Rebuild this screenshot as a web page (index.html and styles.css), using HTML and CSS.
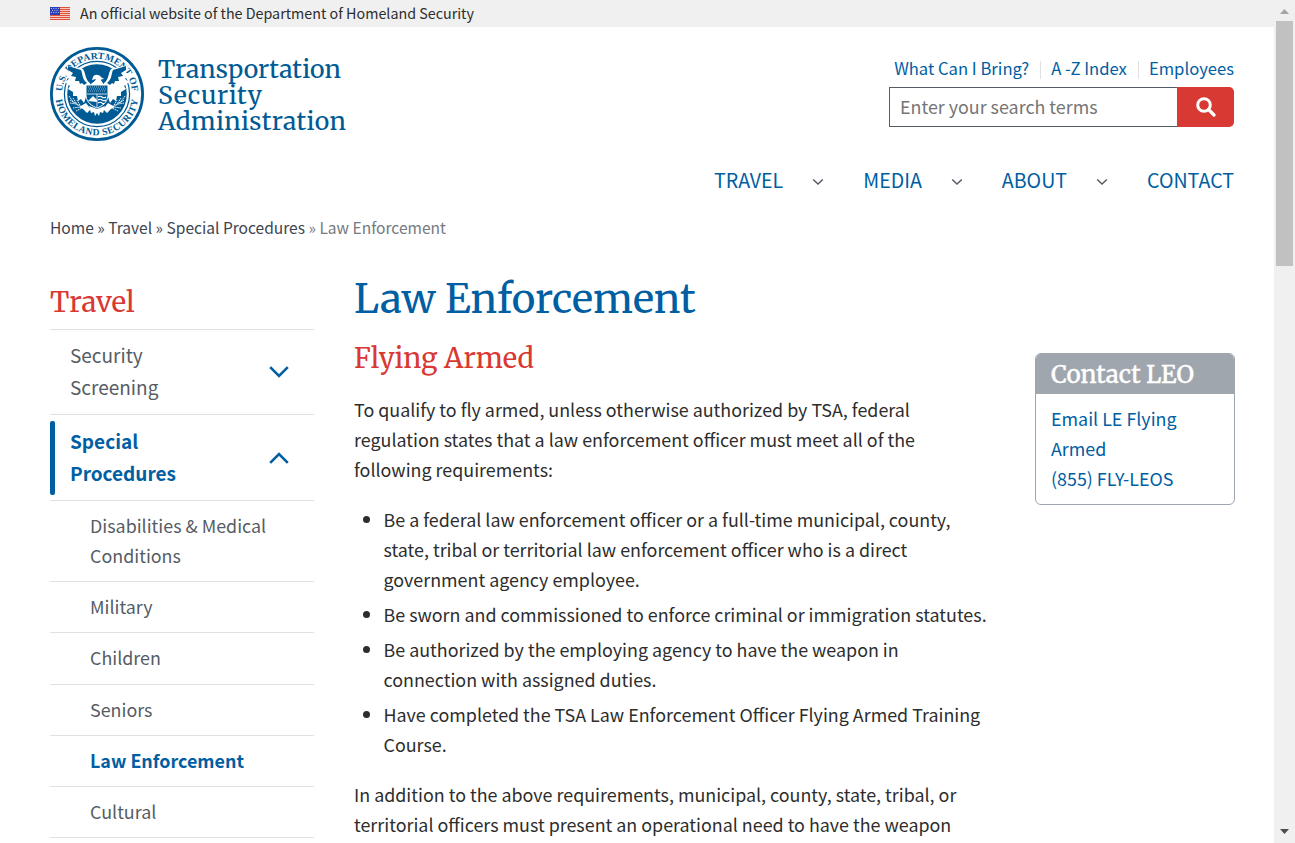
FILE: index.html
```html
<!DOCTYPE html>
<html lang="en">
<head>
<meta charset="utf-8">
<title>Law Enforcement | Transportation Security Administration</title>
<link rel="stylesheet" href="styles.css">
</head>
<body>
<div class="page">
  <div class="banner">
    <svg class="flag" width="20" height="13" viewBox="0 0 20 13">
      <rect width="20" height="13" fill="#f7c9c0"/>
      <path d="M0 .5h20M0 2.5h20M0 4.5h20M0 6.5h20M0 8.5h20M0 10.5h20M0 12.5h20" stroke="#e0513c"/>
      <rect width="10" height="8" fill="#2a3fb5"/>
      <path d="M1 1.5h8M2 3.5h7M1 5.5h8" stroke="#b9c2ee" stroke-dasharray="1 1.3"/>
    </svg>
    <span>An official website of the Department of Homeland Security</span>
  </div>

  <header class="header">
    <a class="brand">
      <svg class="seal" width="94" height="94" viewBox="-47 -47 94 94">
        <defs>
          <path id="arc-top" d="M-35 0A35 35 0 0 1 35 0"/>
          <path id="arc-bottom" d="M-41.5 0A41.5 41.5 0 0 0 41.5 0"/>
        </defs>
        <circle r="45.6" fill="#fff" stroke="#005a94" stroke-width="2.8"/>
        <circle r="32.6" fill="none" stroke="#005a94" stroke-width="1.2"/>
        <circle r="29.8" fill="#005a94"/>
        <g class="seal-text">
          <text text-anchor="middle"><textPath href="#arc-top" startOffset="50%" textLength="105" lengthAdjust="spacing">U.S. DEPARTMENT OF</textPath></text>
          <text text-anchor="middle"><textPath href="#arc-bottom" startOffset="50%" textLength="118" lengthAdjust="spacing">HOMELAND SECURITY</textPath></text>
        </g>
        <g id="wing">
          <path d="M-31-29C-25-27-20-27-14-25C-11-21-12-14-7-11L-7-5L-11 3L-13 9L-16 5L-19 7L-20 2L-24 2L-24-2L-29-5L-27-8L-32-12L-28-15L-32-20L-28-22Z" fill="#fff"/>
          <path d="M-29-28L-16-24C-14-19-15-15-10-11L-13-9L-15-11L-17-10L-18-13L-22-13L-21-17L-26-18L-24-21L-29-24Z" fill="#005a94"/>
          <path d="M-11 9L-18 13L-14 15L-10 19L-7 16L-4 18" fill="#fff"/>
          <path d="M-27 6L-12 15M-28 2L-23 9M-24 4L-19 12M-27 9L-21 10M-24 14L-17 13M-21 17L-15 14M-20 6L-16 13" stroke="#fff" stroke-width=".9" stroke-dasharray="1.6 .6"/>
        </g>
        <use href="#wing" transform="scale(-1 1)"/>
        <path d="M-4-17C-3-20 2-20 4-17L7-15L4-14.500C4-12 8-10 9-6L12-3L-12-3L-8-8C-6-11-2-12-1-15L-5-14Z" fill="#fff"/>
        <path d="M-11-9H11V2C10 9 5 12 0 14C-5 12-10 9-11 2Z" fill="#005a94" stroke="#fff" stroke-width="1"/>
        <path d="M-9-7H9M-8-5H9M-9-3H9" stroke="#fff" stroke-width=".7" stroke-dasharray=".8 1.2"/>
        <path d="M-10 0H10M0 0V13" stroke="#fff" stroke-width=".8"/>
        <path d="M-9 7L-4 2L0 6V8Z" fill="#fff"/>
        <path d="M1 3Q3 1.500 5 3T9 3M1 6Q3 4.500 5 6T9 6M1 9Q3 7.500 5 9T7 9" fill="none" stroke="#fff" stroke-width="1.2"/>
        <path d="M-8 12L0 15L8 12L6 19L3 18L2 22L0 19L-2 22L-3 18L-6 19Z" fill="#fff"/>
      </svg>
      <svg class="wordmark" width="190" height="94" viewBox="0 0 190 94">
        <text x="0" y="30.500" textLength="183">Transportation</text>
        <text x="0" y="56.500" textLength="104">Security</text>
        <text x="0" y="82.500" textLength="188">Administration</text>
      </svg>
    </a>
    <div class="tools">
      <div class="quick"><a>What Can I Bring?</a><a>A -Z Index</a><a>Employees</a></div>
      <div class="search">
        <div class="field">Enter your search terms</div>
        <div class="go">
          <svg width="20" height="20" viewBox="0 0 20 20"><circle cx="8" cy="8" r="6.300" fill="none" stroke="#fff" stroke-width="3"/><path d="M12.500 12.500L18 18" stroke="#fff" stroke-width="3.200" stroke-linecap="round"/></svg>
        </div>
      </div>
    </div>
  </header>

  <nav class="nav">
    <a>TRAVEL</a><svg class="caret" width="12" height="8" viewBox="0 0 12 8"><path d="M1.200 1.500L6 6L10.800 1.500"/></svg>
    <a>MEDIA</a><svg class="caret" width="12" height="8" viewBox="0 0 12 8"><path d="M1.200 1.500L6 6L10.800 1.500"/></svg>
    <a>ABOUT</a><svg class="caret" width="12" height="8" viewBox="0 0 12 8"><path d="M1.200 1.500L6 6L10.800 1.500"/></svg>
    <a>CONTACT</a>
  </nav>

  <div class="crumbs">Home » Travel » Special Procedures <span>» Law Enforcement</span></div>

  <div class="columns">
    <aside class="side">
      <h2 class="side-title">Travel</h2>
      <div class="item"><span>Security<br>Screening</span><svg width="20" height="12" viewBox="0 0 20 12"><path d="M1.200 1.200L10 10L18.800 1.200"/></svg></div>
      <div class="item active"><span>Special<br>Procedures</span><svg width="20" height="12" viewBox="0 0 20 12"><path d="M1.200 10.800L10 2L18.800 10.800"/></svg></div>
      <div class="sub two">Disabilities &amp; Medical<br>Conditions</div>
      <div class="sub">Military</div>
      <div class="sub">Children</div>
      <div class="sub">Seniors</div>
      <div class="sub current">Law Enforcement</div>
      <div class="sub">Cultural</div>
    </aside>
    <main class="main">
      <h1>Law Enforcement</h1>
      <h2>Flying Armed</h2>
      <p>To qualify to fly armed, unless otherwise authorized by TSA, federal<br>regulation states that a law enforcement officer must meet all of the<br>following requirements:</p>
      <ul>
        <li>Be a federal law enforcement officer or a full-time municipal, county,<br>state, tribal or territorial law enforcement officer who is a direct<br>government agency employee.</li>
        <li>Be sworn and commissioned to enforce criminal or immigration statutes.</li>
        <li>Be authorized by the employing agency to have the weapon in<br>connection with assigned duties.</li>
        <li>Have completed the TSA Law Enforcement Officer Flying Armed Training<br>Course.</li>
      </ul>
      <p>In addition to the above requirements, municipal, county, state, tribal, or<br>territorial officers must present an operational need to have the weapon</p>
    </main>
    <aside class="contact">
      <h3>Contact LEO</h3>
      <div class="contact-body"><a>Email LE Flying<br>Armed</a><br><a>(855) FLY-LEOS</a></div>
    </aside>
  </div>
</div>
<div class="scrollbar">
  <svg width="9" height="5" viewBox="0 0 9 5"><path d="M0 5L4.500 0L9 5Z" fill="#a3a3a3"/></svg>
  <div class="thumb"></div>
  <svg class="down" width="9" height="5" viewBox="0 0 9 5"><path d="M0 0H9L4.500 5Z" fill="#4d4d4d"/></svg>
</div>
</body>
</html>
```
FILE: styles.css
```css
* { box-sizing: border-box; }
body {
  margin: 0;
  height: 843px;
  overflow: hidden;
  display: flex;
  background: #fff;
  color: #2d2d2d;
  font: 17.89px/30px "Noto Sans CJK SC", sans-serif;
}
h1, h2, h3, p, ul { margin: 0; padding: 0; font-weight: 400; }
h1, h2, h3 { font-family: Merriweather, "Noto Serif", "DejaVu Serif Condensed", serif; }
a { color: #005ea2; }
.page { width: 1274px; height: 843px; overflow: hidden; }

.banner {
  height: 27px;
  padding-left: 50px;
  display: flex;
  align-items: center;
  gap: 10px;
  background: #f0f0f0;
  font-size: 14.3px;
  line-height: 24px;
}
.banner span { margin-bottom: 2px; }
.header {
  display: flex;
  justify-content: space-between;
  height: 134px;
  padding: 20px 40px 0 50px;
}
.brand { display: flex; gap: 14px; }
.seal-text { font: 600 9.6px "Liberation Serif", serif; fill: #005a94; }
.wordmark text {
  font: 24.8px Merriweather, "Noto Serif", serif;
  fill: #005a94;
}
.tools { width: 345px; padding-top: 8px; }
.quick {
  display: flex;
  justify-content: flex-end;
  height: 32px;
  line-height: 26px;
  font-size: 16.65px;
}
.quick a + a {
  margin-left: 11px;
  padding-left: 11px;
  background: linear-gradient(#dfe1e2, #dfe1e2) 0 6px / 1px 18px no-repeat;
}
.search { display: flex; height: 40px; }
.field {
  width: 288px;
  padding-left: 10px;
  border: 1px solid #565c65;
  border-right: 0;
  line-height: 37px;
  color: #757575;
}
.go {
  width: 57px;
  display: flex;
  align-items: center;
  justify-content: center;
  border-radius: 0 5px 5px 0;
  background: #d83933;
}
.nav {
  display: flex;
  justify-content: flex-end;
  align-items: center;
  height: 38px;
  padding-right: 40px;
  font-size: 19.6px;
}
.caret { margin: 4px 39px 0 29px; }
.caret path { fill: none; stroke: #565c65; stroke-width: 1.5; }
.crumbs {
  padding: 13px 0 0 50px;
  font-size: 15.56px;
  color: #3d4551;
}
.crumbs span { color: #757a80; }

.columns {
  display: grid;
  grid-template-columns: 264px 641px 200px;
  column-gap: 40px;
  padding: 33px 0 0 50px;
}
.side { color: #565c65; }
.side-title {
  height: 55px;
  font-size: 27.8px;
  line-height: 56px;
  color: #d83933;
  border-bottom: 1px solid #dfe1e2;
}
.item {
  position: relative;
  display: flex;
  align-items: center;
  justify-content: space-between;
  height: 85px;
  padding: 0 25px 0 20px;
  border-bottom: 1px solid #dfe1e2;
  font-size: 19px;
  line-height: 32px;
}
.item span { padding-bottom: 2px; }
.item path { fill: none; stroke: #005ea2; stroke-width: 2.6; }
.active { height: 86px; color: #005ea2; font-weight: 700; }
.active::before {
  content: "";
  position: absolute;
  left: 0;
  top: 6px;
  width: 5px;
  height: 74px;
  border-radius: 2px;
  background: #005ea2;
}
.sub {
  height: 51.25px;
  padding: 9px 0 0 40px;
  border-bottom: 1px solid #dfe1e2;
}
.two { height: 81px; }
.current { color: #005ea2; font-weight: 700; }

.main h1 { font-size: 40.25px; line-height: 60px; color: #005ea2; margin-top: -6px; }
.main h2 { font-size: 27.3px; line-height: 40px; color: #d83933; margin: 9px 0 16px; }
.main ul { padding-left: 29.5px; margin: 20px 0; }
.main li + li { margin-top: 5px; }

.contact {
  align-self: start;
  height: 152px;
  margin-top: 78px;
  border: 1px solid #a0a6ad;
  border-radius: 6px;
  overflow: hidden;
}
.contact h3 {
  height: 40px;
  padding-left: 15px;
  background: #9fa6ae;
  color: #fff;
  font-size: 24.2px;
  line-height: 41px;
  -webkit-text-stroke: .4px #fff;
}
.contact-body { padding: 9px 15px; }

.scrollbar {
  width: 21px;
  height: 843px;
  padding: 9px 0 9px 2px;
  display: flex;
  flex-direction: column;
  background: #f0f0f0;
}
.scrollbar svg { margin-left: 4px; flex: none; }
.thumb { width: 17px; height: 245px; margin-top: 7px; background: #c1c1c1; }
.scrollbar .down { margin-top: auto; }
```
